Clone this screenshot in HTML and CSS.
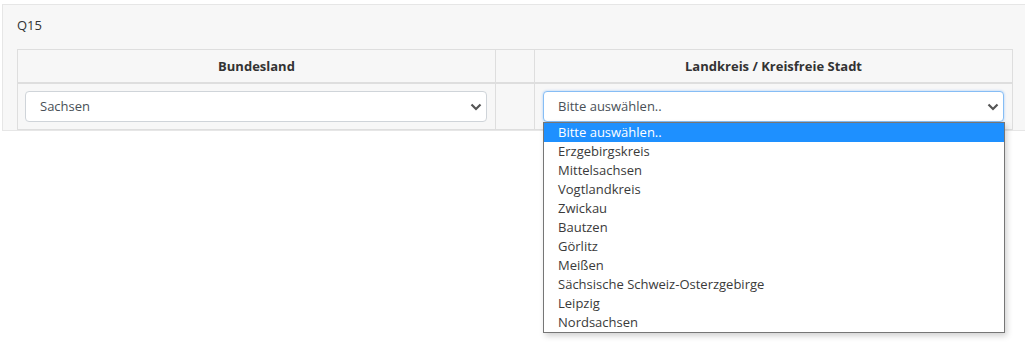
FILE: index.html
```html
<!DOCTYPE html>
<html lang="de">
<head>
    <meta charset="UTF-8">
    <meta name="viewport" content="width=device-width, initial-scale=1.0">
    <title>Q15</title>
    <link rel="stylesheet" href="styles.css">
</head>
<body>
    <div class="question">
        <div class="question-label">Q15</div>
        <table class="grid">
            <thead>
                <tr>
                    <th class="col-wide">Bundesland</th>
                    <th class="col-gap"></th>
                    <th class="col-wide">Landkreis / Kreisfreie Stadt</th>
                </tr>
            </thead>
            <tbody>
                <tr>
                    <td>
                        <div class="select-wrap">
                            <div class="select">Sachsen</div>
                            <svg class="chevron" width="12" height="8" viewBox="0 0 12 8"><path d="M1.5 1.5 L6 6 L10.5 1.5" fill="none" stroke="#555" stroke-width="2.2"/></svg>
                        </div>
                    </td>
                    <td></td>
                    <td>
                        <div class="select-wrap">
                            <div class="select focused">Bitte auswählen..</div>
                            <svg class="chevron" width="12" height="8" viewBox="0 0 12 8"><path d="M1.5 1.5 L6 6 L10.5 1.5" fill="none" stroke="#555" stroke-width="2.2"/></svg>
                            <ul class="options">
                                <li class="active">Bitte auswählen..</li>
                                <li>Erzgebirgskreis</li>
                                <li>Mittelsachsen</li>
                                <li>Vogtlandkreis</li>
                                <li>Zwickau</li>
                                <li>Bautzen</li>
                                <li>Görlitz</li>
                                <li>Meißen</li>
                                <li>Sächsische Schweiz-Osterzgebirge</li>
                                <li>Leipzig</li>
                                <li>Nordsachsen</li>
                            </ul>
                        </div>
                    </td>
                </tr>
            </tbody>
        </table>
    </div>
</body>
</html>
```

FILE: styles.css
```css
html, body {
    min-height: 100%;
}
body {
    margin: 0;
    min-height: 347px;
    font-family: "Open Sans", "Liberation Sans", sans-serif;
    font-size: 13px;
    color: #333;
    background: #fff;
}
.question {
    margin: 4px -1px 0 2px;
    padding: 10px 12px 0 14px;
    background: #f7f7f7;
    border: 1px solid #e6e6e6;
}
.question-label {
    line-height: 20px;
    margin-bottom: 14px;
}
.grid {
    width: 996px;
    border-collapse: collapse;
    table-layout: fixed;
}
.grid th,
.grid td {
    border: 1px solid #dedede;
    padding: 0;
}
.grid th {
    height: 32px;
    padding: 0 6px;
    font-weight: bold;
    text-align: center;
    line-height: 20px;
    border-bottom: 2px solid #dedede;
}
.grid td {
    padding: 7px 8px 7px 7px;
}
.grid td:last-child {
    padding-left: 8px;
}
.col-wide {
    width: 464px;
}
.col-gap {
    width: 26px;
}
.select-wrap {
    position: relative;
}
.select {
    height: 29px;
    line-height: 29px;
    padding: 0 14px;
    background: #fff;
    border: 1px solid #cfd4d9;
    border-radius: 4px;
    color: #495057;
}
.select.focused {
    border-color: #86bdf5;
    box-shadow: 0 0 2px 1px rgba(0, 123, 255, 0.15);
}
.chevron {
    position: absolute;
    right: 5px;
    top: 12px;
}
.options {
    position: absolute;
    top: 31px;
    left: 0;
    right: -1px;
    margin: 0;
    padding: 0;
    list-style: none;
    background: #fff;
    border: 1px solid #767676;
    box-shadow: 2px 3px 6px rgba(0, 0, 0, 0.18);
    z-index: 2;
}
.options li {
    height: 19px;
    line-height: 19px;
    padding: 0 14px;
    color: #3a3a3a;
}
.options li.active {
    background: #1e90ff;
    color: #fff;
}
```
